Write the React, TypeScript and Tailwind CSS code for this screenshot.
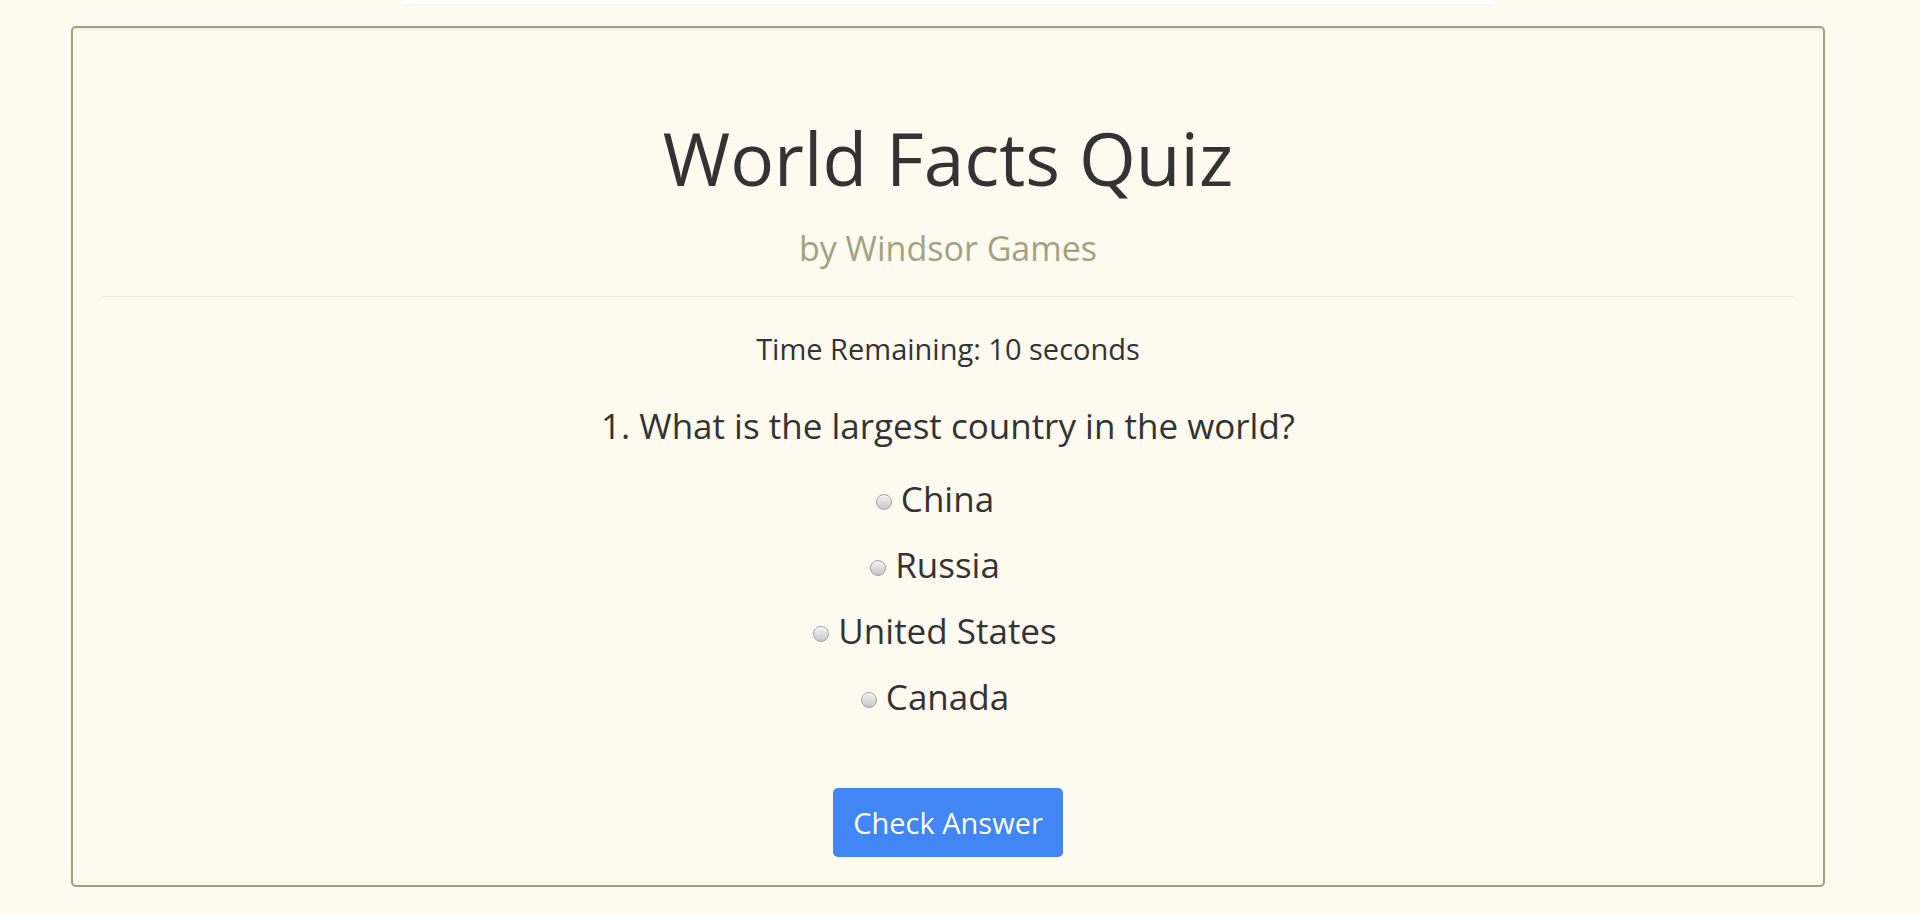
import { useState } from 'react';

const options = ['China', 'Russia', 'United States', 'Canada'];

function Radio({ checked }: { checked: boolean }) {
  return (
    <span className="flex h-[16px] w-[16px] shrink-0 items-center justify-center rounded-full border border-[#a0a0a0] bg-gradient-to-b from-[#f2f2f2] to-[#c8c8c8] shadow-[inset_0_1px_1px_rgba(255,255,255,0.8)]">
      {checked && <span className="h-[7px] w-[7px] rounded-full bg-[#333]" />}
    </span>
  );
}

export default function App() {
  const [picked, setPicked] = useState<string | null>(null);

  return (
    <div
      className="min-h-[915px] bg-[#fefaf0] text-[#333333]"
      style={{ fontFamily: '"Open Sans", "Noto Sans", sans-serif' }}
    >
      <div className="ml-[402px] h-[4px] w-[1092px] bg-white shadow-[0_1px_2px_rgba(0,0,0,0.04)]" />

      <div className="ml-[71px] mt-[22px] flex h-[861px] w-[1754px] flex-col items-center rounded-[5px] border-2 border-[#a09f7d] px-[28px] pt-[90px] shadow-[inset_0_2px_2px_rgba(160,159,125,0.15)]">
        <h1 className="text-[73px] leading-[80px] font-normal">World Facts Quiz</h1>
        <h2 className="mt-[30px] text-[34px] leading-[40px] text-[#a3a27e]">by Windsor Games</h2>

        <hr className="mt-[28px] w-full border-t border-[#ebe9e0]" />

        <p className="mt-[34px] text-[29px] leading-[36px]">Time Remaining: 10 seconds</p>

        <p className="mt-[39px] text-[35px] leading-[40px]">
          1. What is the largest country in the world?
        </p>

        <div className="mt-[20px] flex flex-col items-center">
          {options.map((o) => (
            <label
              key={o}
              onClick={() => setPicked(o)}
              className="flex h-[66px] cursor-pointer items-center gap-[9px] pr-[26px] text-[35px]"
            >
              <span className="mt-[6px]">
                <Radio checked={picked === o} />
              </span>
              <span>{o}</span>
            </label>
          ))}
        </div>

        <button className="mt-[58px] h-[69px] rounded-[5px] bg-[#4285f4] px-[20px] text-[29px] text-white">
          Check Answer
        </button>
      </div>
    </div>
  );
}
